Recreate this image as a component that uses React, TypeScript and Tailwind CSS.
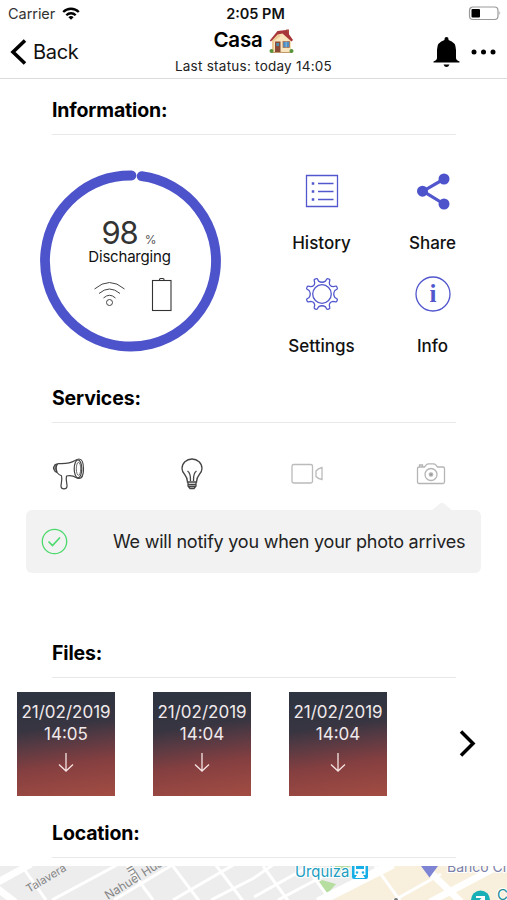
import type { ReactNode } from 'react'

const files = [
  { date: '21/02/2019', time: '14:05' },
  { date: '21/02/2019', time: '14:04' },
  { date: '21/02/2019', time: '14:04' },
]

function SectionTitle({ children }: { children: ReactNode }) {
  return (
    <div className="ml-[52px] mr-[51px] h-[37px] border-b border-[#e8e8ea]">
      <h2 className="text-[19.5px] font-bold leading-6 tracking-[-0.15px] text-black">{children}</h2>
    </div>
  )
}

function HouseIcon() {
  return (
    <svg width="25" height="26" viewBox="0 0 25 26" className="ml-[6px]">
      <path d="M3 11 12 3l10 9v12H3z" fill="#f5dfb0" />
      <path d="M3 11 9 4.500l4 6v13.500H3z" fill="#edcb97" />
      <path d="M17 1.500h3V8l-3-2z" fill="#a9483d" />
      <path d="M.8 12.500 8.500 3 17 2l7 10-1.500 1.500-9-8-5 1L2 13.500z" fill="#a8353a" />
      <path d="M13.500 7 5 13v10.500h16.500V13.500z" fill="#f8e5bd" />
      <rect x="6" y="13.500" width="5.500" height="11" fill="#8b4a35" />
      <rect x="7.300" y="15" width="2.800" height="3" fill="#4c8dae" />
      <rect x="14" y="13.500" width="6.500" height="6" fill="#4d8fc4" stroke="#a9653f" strokeWidth=".7" />
      <path d="M17.200 13.500v6" stroke="#b8d8ec" strokeWidth=".6" />
      <path d="M3 24.500h20" stroke="#c29a6f" />
      <circle cx="2.500" cy="23" r="2" fill="#57933a" />
      <circle cx="22.500" cy="23" r="2" fill="#57933a" />
    </svg>
  )
}

function Header() {
  return (
    <header className="h-[79px] border-b border-[#dcdcdc]">
      <div className="grid h-[27px] grid-cols-3 items-center pl-[8px] pr-[6px]">
        <div className="flex items-center gap-[7px] text-[14.5px] tracking-[-0.05px] text-[#333]">
          Carrier
          <svg width="18" height="13" viewBox="0 0 18 13" fill="none" stroke="#000" strokeWidth="2.300">
            <path d="M1.200 5a11 11 0 0 1 15.600 0M4.300 8.200a6.700 6.700 0 0 1 9.400 0" />
            <path d="M6.400 10.200a3.800 3.800 0 0 1 5.200 0L9 12.800z" fill="#000" stroke="none" />
          </svg>
        </div>
        <div className="pl-[2px] text-center text-[14.5px] font-semibold text-[#111]">2:05 PM</div>
        <div className="flex justify-end">
          <svg width="33" height="15" viewBox="0 0 33 15">
            <rect x="1.500" y="1" width="28.500" height="12.500" rx="3.500" fill="none" stroke="#999" strokeWidth="1.200" />
            <rect x="3.500" y="3" width="8.500" height="8.500" rx="1" fill="#000" />
            <path d="M31.500 5q1.500 2 0 4z" fill="#888" />
          </svg>
        </div>
      </div>
      <div className="grid h-[50px] grid-cols-[150px_1fr_150px]">
        <div className="flex items-center pb-[2px] pl-[10px]">
          <svg width="17" height="26" viewBox="0 0 17 26" fill="none" stroke="#000" strokeWidth="3.600">
            <path d="M15 1.500 3 13l12 11.500" />
          </svg>
          <span className="ml-[6px] mt-[1px] text-[20px] tracking-[-0.3px] text-[#111]">Back</span>
        </div>
        <div className="flex flex-col items-center">
          <div className="flex h-[27px] items-center text-[20.5px] font-semibold tracking-[-0.2px]">
            Casa
            <HouseIcon />
          </div>
          <div className="whitespace-nowrap text-[13.5px] leading-6 tracking-[0.25px] text-[#222]">Last status: today 14:05</div>
        </div>
        <div className="flex items-center justify-end gap-[11px] pb-[2px] pr-[11px]">
          <svg width="27" height="32" viewBox="0 0 27 32">
            <path d="M13.500 1q2 0 2 2v1q7.500 2 7.500 10v8q0 2 3.500 3.500V26.500H.5v-1Q4 24 4 22v-8Q4 6 11.500 4V3q0-2 2-2zM10.500 28.500h6q-1 2.500-3 2.500t-3-2.500z" />
          </svg>
          <svg width="25" height="6" viewBox="0 0 25 6">
            <circle cx="3" cy="3" r="2.500" />
            <circle cx="12.500" cy="3" r="2.500" />
            <circle cx="22" cy="3" r="2.500" />
          </svg>
        </div>
      </div>
    </header>
  )
}

function BatteryRing() {
  return (
    <div className="relative ml-[39px] h-[184px] w-[184px]">
      <svg className="absolute inset-0" width="184" height="184" viewBox="0 0 184 184" fill="none">
        <circle cx="91.500" cy="92" r="85.500" stroke="#4d53ca" strokeWidth="9.800" strokeLinecap="round" strokeDasharray="526 20" transform="rotate(-82.500 91.500 92)" />
      </svg>
      <div className="relative flex flex-col items-center pt-[46px]">
        <div className="mr-[4px] flex items-baseline text-[#333]">
          <span className="text-[31px] leading-9 tracking-[-1px]">98</span>
          <span className="ml-[7px] text-[12px] text-[#555]">%</span>
        </div>
        <div className="-mt-[4px] mr-[3px] text-[15px] leading-5 tracking-[-0.2px] text-[#111]">Discharging</div>
        <div className="ml-[4px] mt-[10px] flex items-center gap-[24px]">
          <svg width="34" height="36" viewBox="0 0 34 36" fill="none" stroke="#444" strokeWidth="1">
            <path d="M1.500 12q15-13 30 0M6 16.500q10.500-9 21 0M10.500 21q6-5.500 12 0" />
            <circle cx="16.500" cy="25.500" r="3" />
          </svg>
          <svg width="22" height="36" viewBox="0 0 22 36" fill="none" stroke="#333" strokeWidth="1.100">
            <rect x="1.500" y="3.500" width="18.500" height="30" />
            <path d="M8.500 3.500v-1q0-1 1-1H12q1 0 1 1v1" />
          </svg>
        </div>
      </div>
    </div>
  )
}

function Action({ label, children }: { label: string; children: ReactNode }) {
  return (
    <button className="flex h-[102.500px] flex-col items-center">
      <svg width="40" height="40" viewBox="0 0 40 40" fill="none" stroke="#5257cd" strokeWidth="1.300">
        {children}
      </svg>
      <span className="mt-[20px] text-[17px] font-medium leading-6 text-[#111]">{label}</span>
    </button>
  )
}

function Information() {
  return (
    <div className="flex h-[251px] pt-[34px]">
      <BatteryRing />
      <div className="ml-[43px] mt-[2px] grid h-[205px] grid-cols-[111px_111px]">
        <Action label="History">
          <path d="M4.500 4.500h31v31h-31z" />
          <path d="M16 12.500h15.500M16 20.500h15.500M16 28.500h15.500" />
          <path d="M11 11.300v2.500M11 19.300v2.500M11 27.300v2.500" strokeWidth="2.500" />
        </Action>
        <Action label="Share">
          <path d="M31 8 10 20.200 31 33" strokeWidth="3.200" />
          <g fill="#4d53ca" stroke="none">
            <circle cx="31" cy="8" r="5.500" />
            <circle cx="9.500" cy="20.200" r="5.500" />
            <circle cx="31" cy="33" r="5.500" />
          </g>
        </Action>
        <Action label="Settings">
          <circle cx="20" cy="20" r="9.300" />
          <path d="M15.300 4.800q-.8-.5-1.600 0l-.8.300q-1 .4-.7 1.400l.5 2.200q-.2 3.800-4 4l-2.200-.5q-1-.3-1.400.7l-.3.800q-.5 1 .3 1.600l2 1.200q2.300 3.500 0 7l-2 1.200q-.8.600-.3 1.600l.3.800q.4 1 1.400.7l2.200-.5q3.800.2 4 4l-.5 2.200q-.3 1 .7 1.400l.8.300q1 .5 1.600-.3l1.200-2q3.500-2.300 7 0l1.200 2q.6.800 1.600.3l.8-.3q1-.4.7-1.400l-.5-2.200q.2-3.800 4-4l2.200.5q1 .3 1.400-.7l.3-.8q.5-1-.3-1.600l-2-1.200q-2.300-3.500 0-7l2-1.200q.8-.6.3-1.600l-.3-.8q-.4-1-1.400-.7l-2.200.5q-3.800-.2-4-4l.5-2.200q.3-1-.7-1.400l-.8-.3q-1-.5-1.600.3l-1.200 2q-3.500 2.300-7 0z" />
        </Action>
        <Action label="Info">
          <circle cx="20" cy="20" r="17" />
          <text x="20" y="28" textAnchor="middle" fill="#5257cd" stroke="none" className="font-['Liberation_Serif',serif] text-[25px] font-bold">i</text>
        </Action>
      </div>
    </div>
  )
}

function Services() {
  return (
    <div className="flex h-[87px] items-center pl-[49px] pt-[14px]">
      <svg width="38" height="40" viewBox="0 0 38 40" fill="none" stroke="#444" strokeWidth="1.200" strokeLinejoin="round">
        <path d="M9 9.500c8 .5 13-.5 17-3 1.500-1 2.500-1.500 4-1.500 3 0 4.500 4.500 4.500 10S33 24.500 30 24.500q-1.500 0-3-1Q23 21 17.500 22c-1 4 .8 7.500.5 10.500q-.2 2.300-3 2.300t-3-2.300c0-3.500 1.500-7 .5-10.700Q10 21 8 18.500 5.500 14 9 9.500z" />
        <ellipse cx="29" cy="14.800" rx="3.800" ry="9" />
        <ellipse cx="29.500" cy="14.800" rx="2.200" ry="6.500" strokeWidth=".8" />
        <path d="M8.500 9.800Q5 10 5 14t3.500 4.500M5.500 12q-2 2 0 4.500M7.500 10.500q-1.500 3.500.5 7.500" />
      </svg>
      <svg width="26" height="40" viewBox="0 0 26 40" fill="none" stroke="#444" strokeWidth="1.300" className="ml-[92px]">
        <path d="M8.500 28q0-4-2.800-7.500Q3 17.500 3 14.500a10 9.500 0 0 1 20 0q0 3-2.700 6Q17.500 24 17.500 28zM8.800 30.500h8.400M9 32.500h8M10.500 34.500h5M11.500 27q.3-8-3-10M14.500 27q-.3-8 3-10M9 28v4l2 2.500M17 28v4l-2 2.500" />
      </svg>
      <svg width="34" height="40" viewBox="0 0 34 40" fill="none" stroke="#bbb" strokeWidth="1.300" className="ml-[85px]">
        <rect x="2" y="10.500" width="20.500" height="18.500" rx="1.800" />
        <path d="M32 13.500v12q-4-.500-6-3V17q2-2.500 6-3.500z" />
      </svg>
      <svg width="32" height="40" viewBox="0 0 32 40" fill="none" stroke="#b5b5b5" strokeWidth="1.300" className="ml-[91px]">
        <path d="M4 13h5.500l2-2.300q.7-.9 2-.9h5q1.300 0 2 .9l2 2.300H28q1.500 0 1.500 1.500V28q0 1.500-1.500 1.500H4Q2.500 29.500 2.500 28V14.500Q2.500 13 4 13zM4.500 12.500V11h3v1.500" />
        <circle cx="16" cy="20.500" r="6" />
        <circle cx="16" cy="20.500" r="1.700" fill="#999" />
      </svg>
    </div>
  )
}

function Notice() {
  return (
    <div className="relative ml-[26px] mr-[26px] flex h-[63px] items-center rounded-[6px] bg-[#f2f2f2] pl-[15px]">
      <svg className="absolute -top-[8px] right-[28px]" width="22" height="9" viewBox="0 0 22 9" fill="#f2f2f2">
        <path d="M0 9 9 1.500q2-1.500 4 0L22 9z" />
      </svg>
      <svg width="27" height="27" viewBox="0 0 27 27" fill="none" stroke="#4bd96c" strokeWidth="1.300">
        <circle cx="13.500" cy="13.500" r="12.200" />
        <path d="m7.500 13.500 4 4 7.500-8" strokeWidth="1.600" />
      </svg>
      <span className="ml-[45px] whitespace-nowrap text-[18px] tracking-[-0.23px] text-[#222]">We will notify you when your photo arrives</span>
    </div>
  )
}

function Files() {
  return (
    <div className="flex h-[143px] pl-[17px] pt-[14px]">
      <div className="flex gap-[38px]">
        {files.map((file, i) => (
          <div key={i} className="flex h-[104px] w-[98px] flex-col items-center bg-[linear-gradient(172deg,#2e3441_5%,#373541_34%,#583a43_48%,#853f40_68%,#a14c43_98%)] pt-[9px] text-[17px] leading-[22px] text-[#f0e9eb]">
            <div className="whitespace-nowrap">{file.date}</div>
            <div>{file.time}</div>
            <svg width="18" height="20" viewBox="0 0 18 20" fill="none" stroke="#f5e4e3" strokeWidth="1.300" className="mt-[8px]">
              <path d="M9 0v18M2 11.500l7 6.500 7-6.500" />
            </svg>
          </div>
        ))}
      </div>
      <svg width="18" height="28" viewBox="0 0 18 28" fill="none" stroke="#000" strokeWidth="3.500" className="ml-[71px] mt-[37px]">
        <path d="m3 2.500 12 12-12 12" />
      </svg>
    </div>
  )
}

function LocationMap() {
  return (
    <svg width="507" height="34" viewBox="0 866 507 34" className="mt-[8px] font-['Inter',sans-serif]">
      <path fill="#ededee" d="M0 866h507v34H0z" />
      <path fill="#f8efdc" d="M324 900 391 866h116v34zM318 900l65-34h124v34z" />
      <path fill="#ededee" d="m291 900 34-20 10 20z" />
      <path fill="#b5dea0" d="m322 880 14 4-9 10-8-12zM335 866h16l-16 8z" />
      <g stroke="#fff" fill="none">
        <path d="M-2 882 31 864M-2 889l17 13" strokeWidth="7" />
        <path d="m24 869 22 31M52 900l65-35M114 900l58-35M173 900l62-36M211 900l43-22 20-14M127 865l26 35M172 865l34 45M215 864l34 45M263 866l26 36M254 897l68-38M278 900l49-26M307 868l25 34" strokeWidth="3" />
        <path d="m318 902 75-38" strokeWidth="9" />
        <path d="m375 866 26 36M391 902l50-28" strokeWidth="3" />
        <path d="m429 871 32 31M430 902l78-41" strokeWidth="7" />
      </g>
      <g fill="#858585" fontSize="12">
        <text transform="translate(29 893) rotate(-31)" fontSize="11.200">Talavera</text>
        <text transform="translate(108 900) rotate(-32)">Nahuel Huapi</text>
        <text transform="translate(126 868) rotate(60)">in</text>
      </g>
      <text x="295" y="876.500" fontSize="14.800" fill="#209dc0" stroke="#fff" strokeWidth="2" paintOrder="stroke">Urquiza</text>
      <rect x="352" y="860" width="16" height="19" rx="2" fill="#18aee8" />
      <path d="M354.500 866h11v9h-11zM355 878l2-3h6l2 3z" fill="#fff" />
      <path d="M356 866h8v3h-8z" fill="#18aee8" />
      <circle cx="357" cy="872.500" r="1.200" fill="#18aee8" />
      <circle cx="363" cy="872.500" r="1.200" fill="#18aee8" />
      <path d="M421 866h17l-8.500 11.500z" fill="#7d84d4" />
      <text x="447" y="872" fontSize="14" fill="#7b80a8" stroke="#fff" strokeWidth="2" paintOrder="stroke">Banco Ciudad</text>
      <circle cx="480.500" cy="900" r="9.500" fill="#18afb7" />
      <path d="M476 897h8v6M484 897l-7 7" stroke="#fff" strokeWidth="2" fill="none" />
      <text x="497" y="900" fontSize="15" fill="#238d95" stroke="#fff" strokeWidth="2" paintOrder="stroke">C</text>
      <circle cx="396" cy="900" r="2" fill="#777" />
    </svg>
  )
}

export default function App() {
  return (
    <div className="h-[900px] w-[507px] overflow-hidden bg-white font-['Inter',sans-serif] text-black">
      <Header />
      <main className="pt-[19px]">
        <SectionTitle>Information:</SectionTitle>
        <Information />
        <SectionTitle>Services:</SectionTitle>
        <Services />
        <Notice />
        <div className="h-[68px]" />
        <SectionTitle>Files:</SectionTitle>
        <Files />
        <SectionTitle>Location:</SectionTitle>
        <LocationMap />
      </main>
    </div>
  )
}
